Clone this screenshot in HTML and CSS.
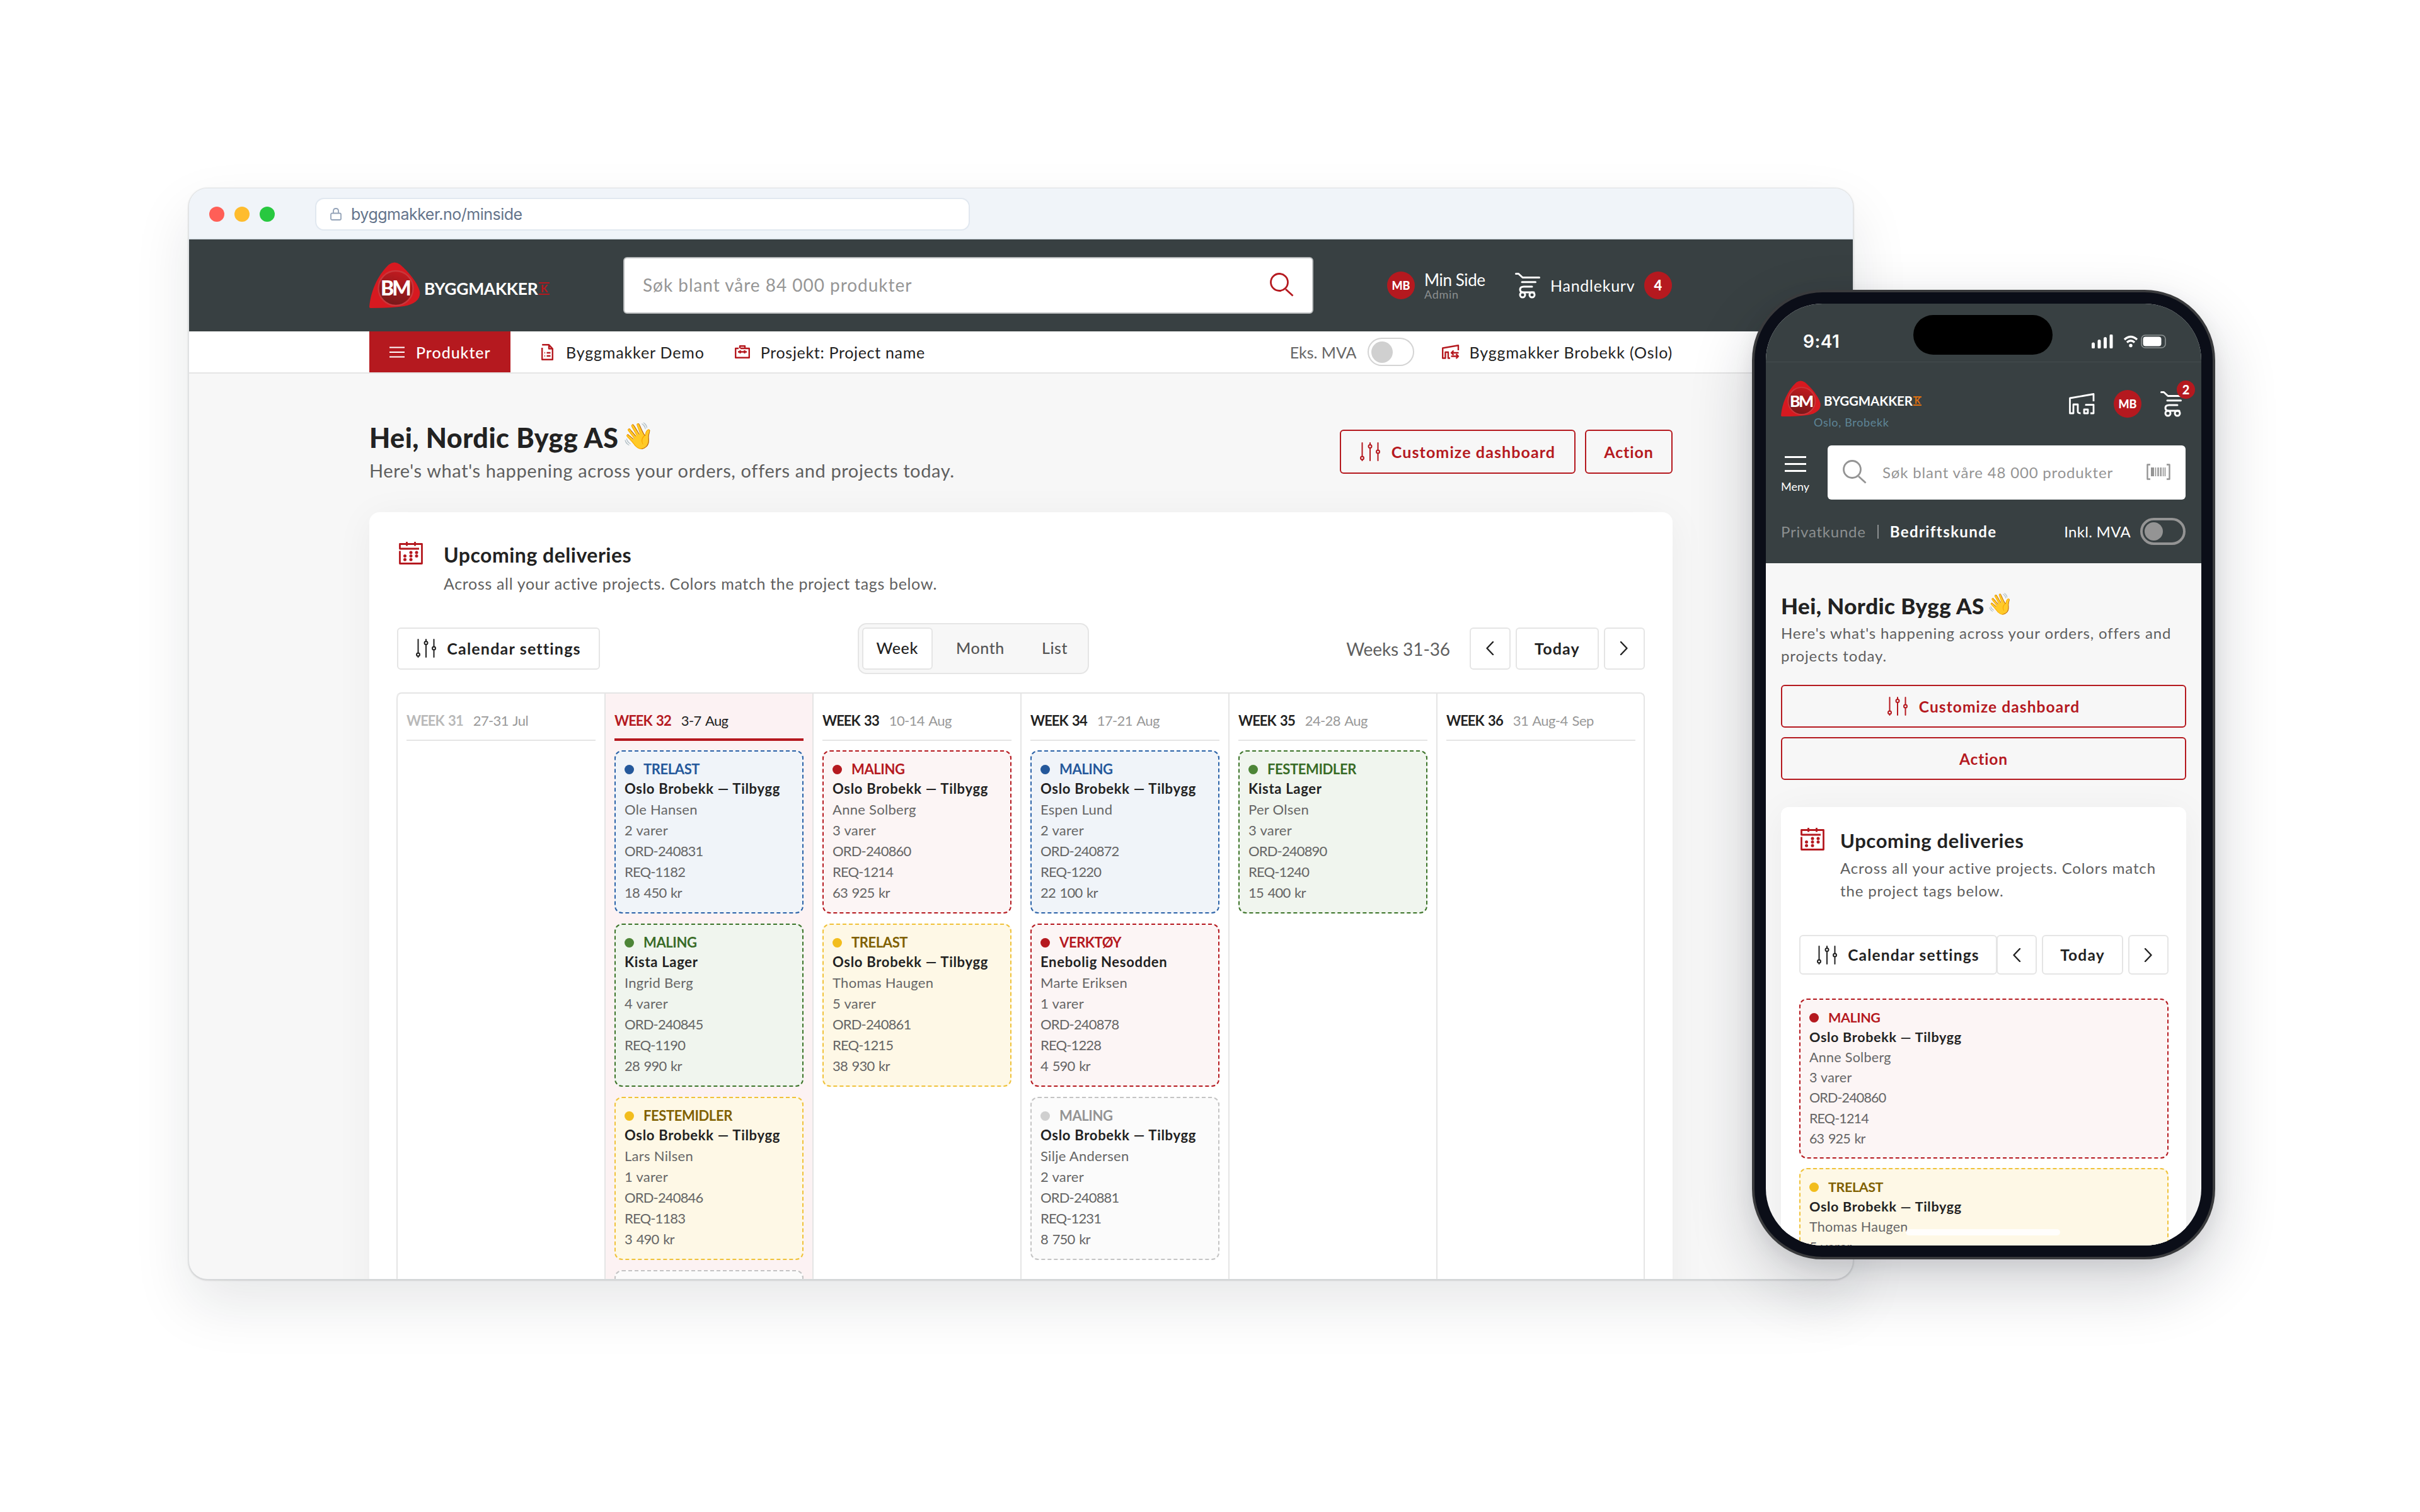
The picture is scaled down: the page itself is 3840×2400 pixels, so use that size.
FILE: index.html
```html
<!DOCTYPE html>
<html lang="en">
<head>
    <meta charset="UTF-8">
    <title>Byggmakker - Min side</title>
    <link rel="stylesheet" href="styles.css">
</head>
<body>

<!-- shared icons -->
<svg class="sprite">
    <defs>
        <linearGradient id="ball" x1="0.7" y1="0" x2="0.4" y2="1">
            <stop offset="0" stop-color="#c41a20"/>
            <stop offset="1" stop-color="#74191a"/>
        </linearGradient>
    </defs>
    <symbol id="i-logo" viewBox="0 0 288 74">
        <path fill="#d71920" d="M0 71C2 48 12 22 31 4Q40-3 49 4C62 15 76 32 80 46C82 58 73 67 55 70Q36 73 3 73Q0 73 0 71Z"/>
        <circle cx="42" cy="41.500" r="27.500" fill="url(#ball)" stroke="#c9373b"/>
    </symbol>
    <symbol id="i-search" viewBox="0 0 38 38">
        <circle cx="15" cy="15" r="13.500"/>
        <path d="M25 26L36.500 36.500"/>
    </symbol>
    <symbol id="i-cart" viewBox="0 0 40 41">
        <path d="M1.500 1.500H5.500L12 7.500H38.500M11 14.700H32.500M27 22H14Q8 22 8 26.500Q8 31 13 31H30"/>
        <circle cx="12" cy="35" r="4"/>
        <circle cx="27" cy="35" r="4"/>
    </symbol>
    <symbol id="i-sliders" viewBox="0 0 32 30">
        <path d="M3.500 1V22.500M3.500 27.500V29M16 1V4M16 9V29M28.500 1V12.500M28.500 17.500V29"/>
        <circle cx="3.500" cy="25" r="2.500"/>
        <circle cx="16" cy="6.500" r="2.500"/>
        <circle cx="28.500" cy="15" r="2.500"/>
    </symbol>
    <symbol id="i-calendar" viewBox="0 0 38 36">
        <path d="M32 11H1.500V3.500H36.500V34.500H1.500V14.500M12.500 0V6.500M25.500 0V6.500"/>
        <g fill="currentColor" stroke="none">
            <circle cx="19" cy="17" r="2.500"/><circle cx="28" cy="17" r="2.500"/>
            <circle cx="9.500" cy="22.500" r="2.500"/><circle cx="19" cy="22.500" r="2.500"/><circle cx="28" cy="22.500" r="2.500"/>
            <circle cx="9.500" cy="28.200" r="2.500"/><circle cx="19" cy="28.200" r="2.500"/>
        </g>
    </symbol>
    <symbol id="i-prev" viewBox="0 0 14 22"><path d="M12 1L2.500 11L12 21"/></symbol>
    <symbol id="i-next" viewBox="0 0 14 22"><path d="M2 1L11.500 11L2 21"/></symbol>
</svg>

<!-- desktop browser window -->
<div class="browser">
    <div class="titlebar">
        <div class="lights"><i class="close"></i><i class="min"></i><i class="max"></i></div>
        <div class="url">
            <svg class="lock" viewBox="0 0 18 20"><rect x="1" y="8.500" width="16" height="10.500" rx="2"/><path d="M5 8.500V5Q5 1 9 1Q13 1 13 5V8.500"/></svg>
            <span>byggmakker.no/minside</span>
        </div>
    </div>

    <header class="top">
        <div class="logo">
            <svg class="mark"><use href="#i-logo"/></svg>
            <b class="bm">BM</b>
            <b class="brand">BYGGMAKKER</b>
            <b class="k">K</b>
        </div>
        <div class="search">
            <span>Søk blant våre 84 000 produkter</span>
            <svg class="icon-search"><use href="#i-search"/></svg>
        </div>
        <div class="account">
            <span class="avatar">MB</span>
            <div class="who"><span class="who-name">Min Side</span><span class="who-role">Admin</span></div>
            <svg class="icon-cart"><use href="#i-cart"/></svg>
            <span class="cart-text">Handlekurv</span>
            <span class="avatar count">4</span>
        </div>
    </header>

    <nav class="nav">
        <div class="products">
            <svg class="burger" viewBox="0 0 24 18"><path d="M0 1.500H24M0 9H24M0 16.500H24"/></svg>
            <span>Produkter</span>
        </div>
        <svg class="icon-doc" viewBox="0 0 19 26"><path d="M1.200 1.200H12L17.800 7.500V24.800H1.200V6M12 1.200V7.500H17.800M5 14H6M8.500 14H14.500M5 19H6M8.500 19H14.500"/></svg>
        <span class="nav-demo">Byggmakker Demo</span>
        <svg class="icon-bag" viewBox="0 0 24 21"><path d="M6 5H1.200V19.800H22.800V5H9M8 5V1.200H16V5M5 10.500H19M8.500 8V13M15.500 8V13"/></svg>
        <span class="nav-project">Prosjekt: Project name</span>
        <span class="nav-vat">Eks. MVA</span>
        <span class="toggle"></span>
        <svg class="icon-swap" viewBox="0 0 28 24"><path d="M26 9V1.200L1.200 5.500V21.500H5.500V12H10V21.500H13M26.500 13H15M18.500 9.500L15 13L18.500 16.500M14.500 18.500H26M22.500 15L26 18.500L22.500 22"/></svg>
        <span class="nav-store">Byggmakker Brobekk (Oslo)</span>
    </nav>

    <main class="page">
        <div class="hello">
            <div>
                <h1>Hei, Nordic Bygg AS<em>👋</em></h1>
                <p>Here's what's happening across your orders, offers and projects today.</p>
            </div>
            <div class="actions">
                <button class="outline customize"><svg class="icon-sliders"><use href="#i-sliders"/></svg><span>Customize dashboard</span></button>
                <button class="outline action">Action</button>
            </div>
        </div>

        <section class="panel">
            <div class="panel-head">
                <svg class="icon-calendar"><use href="#i-calendar"/></svg>
                <div>
                    <h2>Upcoming deliveries</h2>
                    <p>Across all your active projects. Colors match the project tags below.</p>
                </div>
            </div>
            <div class="toolbar">
                <button class="btn settings"><svg class="icon-sliders"><use href="#i-sliders"/></svg><span>Calendar settings</span></button>
                <div class="segment"><span class="on">Week</span><span>Month</span><span>List</span></div>
                <div class="pager">
                    <span class="range">Weeks 31-36</span>
                    <button class="btn arrow"><svg class="icon-arrow"><use href="#i-prev"/></svg></button>
                    <button class="btn today">Today</button>
                    <button class="btn arrow"><svg class="icon-arrow"><use href="#i-next"/></svg></button>
                </div>
            </div>

            <div class="weeks">
                <div class="week past">
                    <div class="week-head"><b>WEEK 31</b><span>27-31 Jul</span></div>
                </div>
                <div class="week current">
                    <div class="week-head"><b>WEEK 32</b><span>3-7 Aug</span></div>
                    <div class="order blue">
                        <h4>TRELAST</h4>
                        <h5>Oslo Brobekk — Tilbygg</h5>
                        <p>Ole Hansen</p><p>2 varer</p><p class="num">ORD-240831</p><p class="num">REQ-1182</p><p class="num">18 450 kr</p>
                    </div>
                    <div class="order green">
                        <h4>MALING</h4>
                        <h5>Kista Lager</h5>
                        <p>Ingrid Berg</p><p>4 varer</p><p class="num">ORD-240845</p><p class="num">REQ-1190</p><p class="num">28 990 kr</p>
                    </div>
                    <div class="order yellow">
                        <h4>FESTEMIDLER</h4>
                        <h5>Oslo Brobekk — Tilbygg</h5>
                        <p>Lars Nilsen</p><p>1 varer</p><p class="num">ORD-240846</p><p class="num">REQ-1183</p><p class="num">3 490 kr</p>
                    </div>
                    <div class="order gray"></div>
                </div>
                <div class="week">
                    <div class="week-head"><b>WEEK 33</b><span>10-14 Aug</span></div>
                    <div class="order red">
                        <h4>MALING</h4>
                        <h5>Oslo Brobekk — Tilbygg</h5>
                        <p>Anne Solberg</p><p>3 varer</p><p class="num">ORD-240860</p><p class="num">REQ-1214</p><p class="num">63 925 kr</p>
                    </div>
                    <div class="order yellow">
                        <h4>TRELAST</h4>
                        <h5>Oslo Brobekk — Tilbygg</h5>
                        <p>Thomas Haugen</p><p>5 varer</p><p class="num">ORD-240861</p><p class="num">REQ-1215</p><p class="num">38 930 kr</p>
                    </div>
                </div>
                <div class="week">
                    <div class="week-head"><b>WEEK 34</b><span>17-21 Aug</span></div>
                    <div class="order blue">
                        <h4>MALING</h4>
                        <h5>Oslo Brobekk — Tilbygg</h5>
                        <p>Espen Lund</p><p>2 varer</p><p class="num">ORD-240872</p><p class="num">REQ-1220</p><p class="num">22 100 kr</p>
                    </div>
                    <div class="order red">
                        <h4>VERKTØY</h4>
                        <h5>Enebolig Nesodden</h5>
                        <p>Marte Eriksen</p><p>1 varer</p><p class="num">ORD-240878</p><p class="num">REQ-1228</p><p class="num">4 590 kr</p>
                    </div>
                    <div class="order gray">
                        <h4>MALING</h4>
                        <h5>Oslo Brobekk — Tilbygg</h5>
                        <p>Silje Andersen</p><p>2 varer</p><p class="num">ORD-240881</p><p class="num">REQ-1231</p><p class="num">8 750 kr</p>
                    </div>
                </div>
                <div class="week">
                    <div class="week-head"><b>WEEK 35</b><span>24-28 Aug</span></div>
                    <div class="order green">
                        <h4>FESTEMIDLER</h4>
                        <h5>Kista Lager</h5>
                        <p>Per Olsen</p><p>3 varer</p><p class="num">ORD-240890</p><p class="num">REQ-1240</p><p class="num">15 400 kr</p>
                    </div>
                </div>
                <div class="week">
                    <div class="week-head"><b>WEEK 36</b><span>31 Aug-4 Sep</span></div>
                </div>
            </div>
        </section>
    </main>
</div>

<!-- phone -->
<div class="phone">
    <div class="screen">
        <div class="island"></div>
        <div class="status">
            <span class="clock">9:41</span>
            <svg class="signal" viewBox="0 0 34 22"><path d="M2.500 15V20M12 10.500V20M21.500 6.500V20M31 2V20"/></svg>
            <svg class="wifi" viewBox="0 0 24 20"><path d="M2 7Q12-2 22 7M6 11.500Q12 6 18 11.500"/><circle cx="12" cy="16.500" r="2.700"/></svg>
            <svg class="battery" viewBox="0 0 40 22"><rect class="shell" x="1" y="1" width="38" height="20" rx="6"/><rect class="fill" x="3.500" y="3.500" width="29" height="15" rx="4"/></svg>
        </div>

        <header class="m-top">
            <div class="m-brand">
                <div>
                    <div class="logo small">
                        <svg class="mark"><use href="#i-logo"/></svg>
                        <b class="bm">BM</b>
                        <b class="brand">BYGGMAKKER</b>
                        <b class="k">K</b>
                    </div>
                    <p class="m-store">Oslo, Brobekk</p>
                </div>
                <div class="m-icons">
                    <svg class="icon-store" viewBox="0 0 41 34"><path d="M39 13V1.500L1.500 8V32H7V18H14V29Q14 32 18.500 32M27 20V18.500H39V32H34"/><rect x="24" y="26" width="6" height="6"/></svg>
                    <span class="avatar">MB</span>
                    <div class="m-cart"><svg class="icon-cart"><use href="#i-cart"/></svg><span class="badge">2</span></div>
                </div>
            </div>
            <div class="m-search-row">
                <div class="menu">
                    <svg class="burger" viewBox="0 0 34 25"><path d="M0 1.500H34M0 12.500H34M0 23.500H34"/></svg>
                    <span>Meny</span>
                </div>
                <div class="m-search">
                    <svg class="icon-search"><use href="#i-search"/></svg>
                    <span>Søk blant våre 48 000 produkter</span>
                    <svg class="barcode" viewBox="0 0 38 26"><path d="M6 1.500H1.500V24.500H6M32 1.500H36.500V24.500H32"/><path stroke-width="5" d="M9.500 6V20"/><path stroke-width="1.600" d="M14.500 6V20M26.500 6V20M29.500 6V20"/><path d="M18.500 6V20M22.700 6V20"/></svg>
                </div>
            </div>
            <div class="m-customer">
                <span class="private">Privatkunde</span>
                <i></i>
                <b>Bedriftskunde</b>
                <span class="incl">Inkl. MVA</span>
                <span class="toggle"></span>
            </div>
        </header>

        <main class="m-page">
            <h1>Hei, Nordic Bygg AS<em>👋</em></h1>
            <p class="m-intro">Here's what's happening across your orders, offers and projects today.</p>
            <button class="outline customize"><svg class="icon-sliders"><use href="#i-sliders"/></svg><span>Customize dashboard</span></button>
            <button class="outline action">Action</button>

            <section class="panel">
                <div class="panel-head">
                    <svg class="icon-calendar"><use href="#i-calendar"/></svg>
                    <div>
                        <h2>Upcoming deliveries</h2>
                        <p>Across all your active projects. Colors match the project tags below.</p>
                    </div>
                </div>
                <div class="m-toolbar">
                    <button class="btn settings"><svg class="icon-sliders"><use href="#i-sliders"/></svg><span>Calendar settings</span></button>
                    <button class="btn arrow"><svg class="icon-arrow"><use href="#i-prev"/></svg></button>
                    <button class="btn today">Today</button>
                    <button class="btn arrow"><svg class="icon-arrow"><use href="#i-next"/></svg></button>
                </div>
                <div class="order red">
                    <h4>MALING</h4>
                    <h5>Oslo Brobekk — Tilbygg</h5>
                    <p>Anne Solberg</p><p>3 varer</p><p class="num">ORD-240860</p><p class="num">REQ-1214</p><p class="num">63 925 kr</p>
                </div>
                <div class="order yellow">
                    <h4>TRELAST</h4>
                    <h5>Oslo Brobekk — Tilbygg</h5>
                    <p>Thomas Haugen</p><p>5 varer</p>
                </div>
            </section>
        </main>
        <div class="home"></div>
    </div>
</div>

</body>
</html>
```
FILE: styles.css
```css
* {
    margin: 0;
    padding: 0;
    box-sizing: border-box;
}

body {
    position: relative;
    width: 3840px;
    height: 2400px;
    overflow: hidden;
    background-color: #fff;
    font-family: Lato, "Noto Sans", sans-serif;
    color: #222;
    white-space: nowrap;
}

svg {
    display: block;
    flex: none;
    fill: none;
    stroke: currentColor;
    stroke-width: 2.4;
    stroke-linejoin: round;
}

.sprite {
    position: absolute;
    width: 0;
    height: 0;
}

button {
    font-family: inherit;
    color: inherit;
    display: flex;
    align-items: center;
    justify-content: center;
    flex: none;
}

em {
    font-style: normal;
    font-weight: 400;
    font-family: "Noto Color Emoji", sans-serif;
}

/* ---------- browser window ---------- */
.browser {
    position: absolute;
    left: 299px;
    top: 298px;
    width: 2642px;
    height: 1733px;
    border: 1px solid #dfe2e4;
    border-radius: 30px;
    overflow: hidden;
    background-color: #f7f7f7;
    box-shadow: 0 40px 90px rgba(20, 25, 40, 0.1), 0 1px 3px rgba(0, 0, 0, 0.2);
}

.titlebar {
    height: 81px;
    padding: 2px 0 0 32px;
    display: flex;
    align-items: center;
    background-color: #f0f4f9;
    border-bottom: 2px solid #e2e9ef;
}

.lights {
    display: flex;
    gap: 16px;
}

.lights i {
    width: 24px;
    height: 24px;
    border-radius: 50%;
}

.close { background-color: #ff5f57; }
.min { background-color: #febc2e; }
.max { background-color: #28c840; }

.url {
    width: 1039px;
    height: 52px;
    margin-left: 64px;
    padding-left: 22px;
    display: flex;
    align-items: center;
    gap: 15px;
    background-color: #fff;
    border: 2px solid #e1e8f0;
    border-radius: 14px;
    font: 400 25px Inter, sans-serif;
    letter-spacing: -0.5px;
    color: #64748b;
}

.lock {
    width: 18px;
    height: 20px;
    stroke: #94a3b8;
    stroke-width: 1.8;
}

/* ---------- header ---------- */
.top {
    height: 146px;
    padding: 0 286px;
    display: flex;
    align-items: center;
    background-color: #384042;
    color: #fff;
}

/* letters sit on top of the mark */
.logo {
    position: relative;
    width: 288px;
    height: 74px;
    flex: none;
}

.mark {
    width: 288px;
    height: 74px;
    stroke: none;
}

.logo b {
    position: absolute;
    line-height: 30px;
}

.bm {
    left: 18px;
    top: 26px;
    font-size: 32px;
    font-weight: 900;
    letter-spacing: -3px;
}

.brand {
    left: 87px;
    top: 27px;
    font-size: 26.5px;
    font-weight: 700;
    letter-spacing: -0.3px;
}

.logo .k {
    left: 269px;
    top: 32px;
    width: 17px;
    height: 20px;
    border: solid #b5191f;
    border-width: 2px 0;
    font-size: 16px;
    line-height: 16px;
    font-weight: 900;
    text-align: center;
    color: #b5191f;
}

.search {
    width: 1095px;
    height: 90px;
    margin-left: 115px;
    padding: 0 29px 2px;
    display: flex;
    align-items: center;
    justify-content: space-between;
    background-color: #fff;
    border: 2px solid #b9bcbd;
    border-radius: 6px;
    font-size: 28px;
    letter-spacing: 0.97px;
    color: #969696;
}

.icon-search {
    width: 38px;
    height: 38px;
    color: #b5191f;
    stroke-width: 2.8;
}

.account {
    margin-left: 117px;
    display: flex;
    align-items: center;
    flex: 1;
}

.avatar {
    width: 44px;
    height: 44px;
    border-radius: 50%;
    background-color: #b5191f;
    font-size: 18px;
    font-weight: 900;
    line-height: 44px;
    text-align: center;
    color: #fff;
    flex: none;
}

.who {
    width: 144px;
    margin-left: 15px;
    padding-top: 2px;
    display: flex;
    flex-direction: column;
}

.who-name {
    font-size: 26px;
    line-height: 26px;
    letter-spacing: -0.4px;
}

.who-role {
    font-size: 18px;
    line-height: 21px;
    letter-spacing: 0.7px;
    color: #8b8f90;
}

.icon-cart {
    width: 40px;
    height: 41px;
    stroke-width: 3;
    stroke-linecap: round;
}

.cart-text {
    width: 149px;
    margin-left: 16px;
    font-size: 25px;
    letter-spacing: 0.75px;
}

.account .count {
    font-size: 22px;
}

/* ---------- nav ---------- */
.nav {
    height: 67px;
    padding: 0 286px;
    display: flex;
    align-items: center;
    background-color: #fff;
    border-bottom: 2px solid #e5e5e5;
    font-size: 25px;
}

.products {
    width: 224px;
    height: 65px;
    padding-left: 32px;
    display: flex;
    align-items: center;
    gap: 18px;
    background-color: #b5191f;
    font-weight: 500;
    letter-spacing: 0.95px;
    color: #fff;
}

.products .burger {
    width: 24px;
    height: 18px;
    stroke-width: 1.8;
}

.icon-doc {
    width: 19px;
    height: 26px;
    margin-left: 49px;
    color: #b5191f;
}

.nav-demo {
    margin-left: 20px;
    letter-spacing: 0.85px;
}

.icon-bag {
    width: 24px;
    height: 21px;
    margin-left: 48px;
    color: #b5191f;
}

.nav-project {
    margin-left: 17px;
    letter-spacing: 0.68px;
}

.nav-vat {
    margin-left: auto;
    color: #666;
}

.toggle {
    width: 74px;
    height: 45px;
    margin-left: 17px;
    padding: 4px;
    display: flex;
    align-items: center;
    border: 2px solid #d4d4d4;
    border-radius: 23px;
}

.toggle::before {
    content: "";
    width: 34px;
    height: 34px;
    border-radius: 50%;
    background-color: #d0d0d0;
}

.icon-swap {
    width: 28px;
    height: 24px;
    margin-left: 44px;
    color: #b5191f;
}

.nav-store {
    margin-left: 16px;
    letter-spacing: 0.87px;
}

/* ---------- page ---------- */
.page {
    padding: 72px 286px 0;
}

.hello {
    display: flex;
    align-items: center;
    justify-content: space-between;
}

.hello h1 {
    font-size: 43px;
    font-weight: 900;
    line-height: 59px;
    letter-spacing: 0.5px;
    display: flex;
}

.hello h1 em {
    margin-left: 6px;
    font-size: 41px;
    line-height: 54px;
}

.hello p {
    font-size: 29px;
    line-height: 45px;
    letter-spacing: 0.62px;
    color: #5f5f5f;
}

.actions {
    display: flex;
    gap: 15px;
}

.outline {
    height: 70px;
    background-color: transparent;
    border: 2px solid #b5191f;
    border-radius: 6px;
    font-size: 25px;
    font-weight: 700;
    letter-spacing: 1.1px;
    color: #b5191f;
}

.customize {
    width: 374px;
    gap: 18px;
}

.action {
    width: 139px;
    letter-spacing: 0.88px;
}

.icon-sliders {
    width: 32px;
    height: 30px;
    stroke-width: 2;
    stroke-linecap: round;
}

.panel {
    margin-top: 44px;
    padding: 44px 44px 0;
    background-color: #fff;
    border-radius: 16px;
    box-shadow: 0 8px 60px rgba(0, 0, 0, 0.05);
}

.panel-head {
    display: flex;
}

.icon-calendar {
    width: 38px;
    height: 36px;
    margin: 3px 33px 0 3px;
    color: #b5191f;
    stroke-width: 2.8;
}

.panel-head h2 {
    font-size: 32px;
    font-weight: 700;
    line-height: 48px;
    letter-spacing: 0.5px;
}

.panel-head p {
    margin-top: 2px;
    font-size: 25px;
    line-height: 38px;
    letter-spacing: 0.67px;
    color: #5f5f5f;
}

.toolbar {
    margin-top: 44px;
    display: flex;
    align-items: center;
    justify-content: space-between;
}

.btn {
    height: 67px;
    padding-bottom: 2px;
    background-color: #fff;
    border: 2px solid #e5e5e5;
    border-radius: 6px;
    font-size: 25px;
    font-weight: 700;
    letter-spacing: 1.2px;
}

.settings {
    width: 322px;
    gap: 17px;
}

.segment {
    width: 367px;
    height: 81px;
    padding: 5px;
    display: flex;
    gap: 15px;
    background-color: #f7f7f7;
    border: 2px solid #e5e5e5;
    border-radius: 14px;
    font-size: 25px;
    font-weight: 500;
    line-height: 65px;
    letter-spacing: 0.6px;
    color: #555;
}

.segment span {
    padding: 0 22px;
}

.segment .on {
    padding: 0 21px;
    background-color: #fff;
    border: 2px solid #e5e5e5;
    border-radius: 6px;
    line-height: 61px;
    color: #222;
}

.pager {
    display: flex;
    align-items: center;
    gap: 8px;
}

.range {
    margin-right: 23px;
    font-size: 28px;
    letter-spacing: -0.1px;
    color: #5f5f5f;
}

.arrow {
    width: 65px;
}

.today {
    width: 132px;
}

.icon-arrow {
    width: 14px;
    height: 22px;
    stroke-linecap: round;
}

/* ---------- calendar ---------- */
.weeks {
    width: 1981px;
    height: 1100px;
    margin: 29px 0 0 -1px;
    display: grid;
    grid-template-columns: repeat(6, 330px);
    border-top: 2px solid #e5e5e5;
    border-right: 2px solid #e5e5e5;
    border-radius: 8px;
}

.week {
    padding: 0 14px;
    border-left: 2px solid #e5e5e5;
}

.week:first-child {
    border-top-left-radius: 8px;
}

.week-head {
    height: 75px;
    margin-bottom: 15px;
    padding-top: 26px;
    display: flex;
    gap: 16px;
    border-bottom: 2px solid #e5e5e5;
    font-size: 22px;
    line-height: 34px;
    color: #999;
}

.week-head b {
    letter-spacing: -0.95px;
    word-spacing: 2px;
    color: #222;
}

.week-head span {
    letter-spacing: -0.6px;
    word-spacing: 2px;
}

.past .week-head b {
    color: #b9b9b9;
}

.current {
    background-color: #fcf2f3;
}

.current .week-head {
    border-bottom: 4px solid #b5191f;
    color: #222;
}

.current .week-head b {
    color: #b5191f;
}

.order {
    height: 259px;
    margin-bottom: 16px;
    padding: 13px 14px 0;
    border: 2px dashed #c4c4c4;
    border-radius: 12px;
    background-color: #fbfbfb;
    font-size: 22px;
}

.order h4 {
    display: flex;
    align-items: center;
    gap: 15px;
    font-size: 22px;
    line-height: 30px;
    letter-spacing: -0.4px;
    color: #949494;
}

.order h4::before {
    content: "";
    width: 15px;
    height: 15px;
    border-radius: 50%;
    background-color: #cfcfcf;
}

.order h5 {
    font-size: 22px;
    line-height: 32px;
    letter-spacing: 0.7px;
}

.order p {
    line-height: 33px;
    letter-spacing: 0.28px;
    color: #666;
}

.order .num {
    letter-spacing: -0.85px;
    word-spacing: 2px;
}

.blue { background-color: #f0f4f9; border-color: #2a62a8; }
.blue h4 { color: #24589b; }
.blue h4::before { background-color: #24589b; }

.green { background-color: #f0f5ee; border-color: #3c7429; }
.green h4 { color: #386b26; }
.green h4::before { background-color: #4d8537; }

.yellow { background-color: #fef8e6; border-color: #f0c239; }
.yellow h4 { color: #806000; }
.yellow h4::before { background-color: #f2bd1d; }

.red { background-color: #fcf5f5; border-color: #b5191f; }
.red h4 { color: #b5191f; }
.red h4::before { background-color: #b5191f; }

/* ---------- phone ---------- */
.phone {
    position: absolute;
    left: 2780px;
    top: 460px;
    width: 735px;
    height: 1539px;
    padding: 18px;
    border: 4px solid #3a3b3d;
    border-radius: 112px;
    background-color: #0b0e18;
    box-shadow: 0 40px 100px rgba(20, 25, 40, 0.2), 0 10px 30px rgba(20, 25, 40, 0.08);
}

.screen {
    position: relative;
    width: 691px;
    height: 1495px;
    border-radius: 90px;
    overflow: hidden;
    background-color: #f7f7f7;
}

.island {
    position: absolute;
    left: 234px;
    top: 18px;
    width: 221px;
    height: 63px;
    border-radius: 32px;
    background-color: #000;
}

.home {
    position: absolute;
    left: 222px;
    top: 1469px;
    width: 245px;
    height: 10px;
    border-radius: 5px;
    background-color: rgba(255, 255, 255, 0.85);
}

.status {
    height: 93px;
    padding: 28px 56px 0 59px;
    display: flex;
    align-items: center;
    background-color: #384042;
    border-bottom: 1px solid #444c4f;
    color: #fff;
}

.clock {
    flex: 1;
    font: 600 28px Inter, sans-serif;
    letter-spacing: 0.5px;
}

.signal {
    width: 34px;
    height: 22px;
    stroke-width: 5;
    stroke-linecap: round;
}

.wifi {
    width: 24px;
    height: 20px;
    margin: 0 4px 0 16px;
    stroke-width: 3.4;
}

.wifi circle {
    fill: #fff;
    stroke: none;
}

.battery {
    width: 40px;
    height: 22px;
}

.shell { stroke: #8c9293; stroke-width: 1.6; }
.fill { fill: #fff; stroke: none; }

.m-top {
    height: 319px;
    padding: 29px 25px 0 24px;
    background-color: #384042;
    color: #fff;
}

.m-brand {
    height: 103px;
    display: flex;
    justify-content: space-between;
}

.small {
    width: 225px;
    height: 55px;
}

.small .mark {
    width: 225px;
    height: 57.800px;
}

.small .bm {
    left: 14px;
    top: 17px;
    font-size: 25px;
    letter-spacing: -2.4px;
}

.small .brand {
    left: 68px;
    top: 17px;
    font-size: 20.500px;
    letter-spacing: -0.1px;
}

.small .k {
    left: 210px;
    top: 25px;
    width: 13px;
    height: 15px;
    font-size: 13px;
    line-height: 11px;
    border-color: #e0700f;
    color: #e0700f;
}

.m-store {
    margin-left: 52px;
    font-size: 18px;
    line-height: 23px;
    letter-spacing: 0.67px;
    color: #5e8597;
}

.m-icons {
    height: 74px;
    display: flex;
    align-items: center;
    gap: 30px;
}

.icon-store {
    width: 41px;
    height: 34px;
    stroke-width: 2.8;
}

.m-cart {
    position: relative;
}

.badge {
    position: absolute;
    right: -15px;
    top: -17px;
    width: 29px;
    height: 29px;
    border-radius: 50%;
    background-color: #b5191f;
    font-size: 20px;
    font-weight: 900;
    line-height: 28px;
    text-align: center;
}

.m-search-row {
    display: flex;
    justify-content: space-between;
}

.menu {
    width: 46px;
    padding-top: 17px;
    font-size: 18px;
    line-height: 20px;
}

.menu .burger {
    width: 34px;
    height: 25px;
    margin: 0 0 13px 6px;
    stroke-width: 2.8;
}

.m-search {
    width: 568px;
    height: 86px;
    padding: 0 24px 2px;
    display: flex;
    align-items: center;
    background-color: #fff;
    border-radius: 6px;
    font-size: 24px;
    letter-spacing: 0.82px;
    color: #949494;
}

.m-search .icon-search {
    margin-right: 25px;
    color: #949494;
}

.barcode {
    width: 38px;
    height: 26px;
    margin-left: auto;
}

.m-customer {
    height: 43px;
    margin-top: 29px;
    display: flex;
    align-items: center;
    font-size: 24px;
}

.private {
    letter-spacing: 0.77px;
    color: #8b8f90;
}

.m-customer i {
    width: 2px;
    height: 22px;
    margin: 0 18px;
    background-color: #8b8f90;
}

.m-customer b {
    letter-spacing: 1.4px;
}

.incl {
    margin-left: auto;
    letter-spacing: 0.3px;
}

.m-customer .toggle {
    width: 72px;
    height: 43px;
    margin-left: 15px;
    padding: 3px;
    border: 4px solid #949494;
}

.m-customer .toggle::before {
    width: 29px;
    height: 29px;
    background-color: #949494;
}

.m-page {
    padding: 45px 24px 0;
}

.m-page h1 {
    font-size: 35px;
    font-weight: 900;
    line-height: 44px;
    letter-spacing: 0.45px;
    display: flex;
}

.m-page h1 em {
    margin-left: 5px;
    font-size: 33px;
    line-height: 40px;
}

.m-intro {
    margin: 4px 0 28px;
    font-size: 24px;
    line-height: 36px;
    letter-spacing: 0.88px;
    color: #5f5f5f;
    white-space: normal;
}

.m-page .outline {
    width: 643px;
    height: 68px;
    margin-bottom: 15px;
    font-size: 24.500px;
}

.m-page .panel {
    height: 900px;
    margin-top: 43px;
    padding: 32px 28px 0 29px;
    border-radius: 12px;
}

.m-page .icon-calendar {
    margin: 1px 25px 0 2px;
}

.m-page h2 {
    font-size: 31px;
    line-height: 42px;
    letter-spacing: 0.63px;
}

.m-page .panel-head p {
    margin-top: 5px;
    font-size: 24px;
    line-height: 36px;
    letter-spacing: 0.87px;
    white-space: normal;
}

.m-toolbar {
    margin: 52px 0 38px;
    display: flex;
    gap: 8px;
}

.m-page .btn {
    height: 63px;
    padding-bottom: 0;
    font-size: 24.500px;
}

.m-page .settings {
    width: 314px;
    margin-right: -9px;
}

.m-page .arrow {
    width: 64px;
}

.m-page .today {
    width: 129px;
}

.m-page .order {
    height: 254px;
    margin-bottom: 15px;
    padding-top: 13px;
    font-size: 21.500px;
}

.m-page h4,
.m-page h5 {
    font-size: 21.500px;
}

.m-page .order p {
    line-height: 32.200px;
}
```
